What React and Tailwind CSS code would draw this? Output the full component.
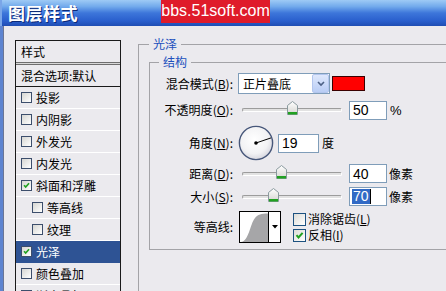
import React from "react";

// Photoshop "图层样式" dialog, 光泽 (Satin) page
const items = [
    { t: "投影" },
    { t: "内阴影" },
    { t: "外发光" },
    { t: "内发光" },
    { t: "斜面和浮雕", c: true },
    { t: "等高线", indent: true },
    { t: "纹理", indent: true },
    { t: "光泽", c: true, sel: true },
    { t: "颜色叠加" },
    { t: "渐变叠加" },
];

const Tick = ({ size = 11 }) => (
    <svg width={size} height={size} viewBox="0 0 11 11">
        <path d="M2.5 5.2 L4.5 7.4 L8.6 2.8" fill="none" stroke="#21a121" strokeWidth="2" />
    </svg>
);

const ListCheck = ({ checked }) => (
    <span className="w-[11px] h-[11px] shrink-0 border border-[#3c4e6c] bg-gradient-to-br from-[#d6d6d2] to-white flex items-center justify-center">
        {checked && <Tick size={9} />}
    </span>
);

const XpCheck = ({ checked }) => (
    <span className="w-[13px] h-[13px] shrink-0 border border-[#1c5180] bg-gradient-to-br from-[#dcdcd7] to-white flex items-center justify-center">
        {checked && <Tick size={11} />}
    </span>
);

const Key = ({ k }) => <span className="underline underline-offset-1">{k}</span>;

const Label = ({ text, k }) => (
    <div className="w-[88px] shrink-0 text-right text-[12px] leading-none text-black pr-[5px]">
        {text}{k && <>(<Key k={k} />)</>}:
    </div>
);

const Slider = ({ pos }) => (
    <div className="relative w-[100px] h-[16px] ml-[4px] flex items-center">
        <div className="w-full h-[4px] rounded-full border-t border-l border-[#9c9c9c] border-b border-r border-b-white border-r-white bg-[#e2e2e2]" />
        <svg className="absolute top-[-1px]" style={{ left: pos - 5 }} width="11" height="14" viewBox="0 0 11 14">
            <defs>
                <linearGradient id="th" x1="0" y1="0" x2="0" y2="1">
                    <stop offset="0" stopColor="#ffffff" />
                    <stop offset="1" stopColor="#d4d4d0" />
                </linearGradient>
            </defs>
            <path d="M0.5 4.5 L5.5 0.5 L10.5 4.5 L10.5 13.5 L0.5 13.5 Z" fill="url(#th)" stroke="#8a9a9e" />
            <rect x="1" y="11" width="9" height="2.5" fill="#21a121" />
        </svg>
    </div>
);

const NumBox = ({ v, w = "w-[38px]", selected }) => (
    <div className={`${w} h-[19px] bg-white border border-[#7f9db9] flex items-center pl-[2px] font-['Liberation_Sans',sans-serif] text-[14px] text-black`}>
        {selected ? (
            <>
                <span className="bg-[#316ac5] text-white leading-[15px] px-[1px]">{v}</span>
                <span className="w-[1px] h-[15px] bg-black" />
            </>
        ) : (
            <span className="leading-none pl-[1px]">{v}</span>
        )}
    </div>
);

const Dial = () => (
    <svg width="36" height="36" viewBox="0 0 36 36">
        <defs>
            <radialGradient id="dg" cx="0.45" cy="0.4" r="0.6">
                <stop offset="0" stopColor="#ffffff" />
                <stop offset="0.7" stopColor="#f2f2f4" />
                <stop offset="1" stopColor="#d8d8e0" />
            </radialGradient>
        </defs>
        <circle cx="18" cy="18" r="16.6" fill="url(#dg)" stroke="#47577a" strokeWidth="1.4" />
        <line x1="18" y1="18" x2="33" y2="12.9" stroke="#000" strokeWidth="1" />
        <circle cx="18" cy="18" r="1.8" fill="#000" />
    </svg>
);

const Contour = () => (
    <div className="w-[42px] h-[32px] ml-[1px] bg-white border border-black flex">
        <svg width="28" height="30" viewBox="0 0 28 30">
            <path d="M1 30 C9 29 10 12 15 6 C18 2.5 21 1.5 28 1.5 L28 30 Z" fill="#a6a6a8" />
        </svg>
        <div className="w-[12px] h-full border-l border-black flex items-center justify-center">
            <svg width="6" height="4" viewBox="0 0 6 4"><path d="M0 0 L6 0 L3 3.5 Z" fill="#000" /></svg>
        </div>
    </div>
);

export default function App() {
    return (
        <div className="w-[446px] h-[291px] overflow-hidden bg-[#ebeaee] flex flex-col font-['Noto_Sans_CJK_SC',sans-serif]">
            {/* title bar */}
            <div className="h-[26px] shrink-0 flex items-center bg-[linear-gradient(to_bottom,#9ecaf5_0%,#72aaec_25%,#3d76da_50%,#2a5fcd_80%,#1f4db3_100%)] border-l-[2px] border-[#7aa6e8]">
                <span className="ml-[6px] mb-[1px] text-[17px] font-bold text-white leading-none tracking-[0.5px] [text-shadow:1px_1px_0_#0c2a78]">图层样式</span>
                <span className="ml-[83px] self-start h-[23px] w-[109px] bg-[#df1b2a] text-white font-['Liberation_Sans',sans-serif] text-[16px] leading-[22px] flex justify-center">bbs.51soft.com</span>
            </div>

            <div className="flex flex-1 min-h-0">
                {/* window frame */}
                <div className="w-[4px] shrink-0 border-l-[3px] border-[#5d84d0] bg-[#6b7694]" />

                {/* style list */}
                <div className="ml-[11px] mt-[14px] w-[106px] shrink-0 border-t border-x border-[#1a1a1a] text-[12px] text-black">
                    <div className="h-[21px] flex items-center pl-[5px] leading-none">样式</div>
                    <div className="h-[3px] border-y border-[#6e6e6e] bg-[#d8d8d8]" />
                    <div className="h-[22px] flex items-center pl-[5px] border-b border-[#1a1a1a] leading-none">混合选项:默认</div>
                    {items.map(it => (
                        <div
                            key={it.t}
                            className={`h-[22px] flex items-center gap-[4px] border-b leading-none ${it.indent ? "pl-[16px]" : "pl-[5px]"} ${it.sel ? "bg-[#2e5394] text-white border-[#2e5394]" : "border-white"}`}
                        >
                            <ListCheck checked={it.c} />
                            <span>{it.t}</span>
                        </div>
                    ))}
                </div>

                {/* right panel */}
                <fieldset className="ml-[17px] mt-[10px] flex-1 min-w-[330px] border-t border-l border-[#a3a3a7]">
                    <legend className="ml-[10px] px-[4px] text-[12px] leading-[16px] text-[#2150bd]">光泽</legend>
                    <fieldset className="ml-[10px] mt-[2px] border-t border-l border-b border-[#a3a3a7] pb-[6px]">
                        <legend className="ml-[9px] px-[4px] text-[12px] leading-[16px] text-[#2150bd]">结构</legend>

                        <div className="mt-[3px] h-[21px] flex items-center">
                            <Label text="混合模式" k="B" />
                            <div className="w-[92px] h-[21px] bg-white border border-[#7f9db9] flex items-center">
                                <span className="flex-1 pl-[4px] text-[12px] leading-none">正片叠底</span>
                                <span className="w-[17px] h-[19px] rounded-[2px] border border-[#b3c6ee] bg-gradient-to-b from-[#dfe8fc] to-[#b9cdf5] flex items-center justify-center">
                                    <svg width="8" height="6" viewBox="0 0 8 6"><path d="M1 1 L4 4 L7 1" fill="none" stroke="#4d6185" strokeWidth="1.6" /></svg>
                                </span>
                            </div>
                            <div className="ml-[2px] w-[33px] h-[15px] bg-[#ff0000] border border-[#3a0000]" />
                        </div>

                        <div className="mt-[6px] h-[20px] flex items-center">
                            <Label text="不透明度" k="O" />
                            <Slider pos={50} />
                            <div className="ml-[7px]"><NumBox v="50" /></div>
                            <span className="ml-[3px] font-['Liberation_Sans',sans-serif] text-[13px] leading-none">%</span>
                        </div>

                        <div className="mt-[5px] h-[36px] flex items-center">
                            <Label text="角度" k="N" />
                            <Dial />
                            <div className="ml-[4px]"><NumBox v="19" w="w-[41px]" /></div>
                            <span className="ml-[3px] text-[12px] leading-none">度</span>
                        </div>

                        <div className="mt-[3px] h-[19px] flex items-center">
                            <Label text="距离" k="D" />
                            <Slider pos={39} />
                            <div className="ml-[7px]"><NumBox v="40" /></div>
                            <span className="ml-[2px] text-[12px] leading-none">像素</span>
                        </div>

                        <div className="mt-[4px] h-[19px] flex items-center">
                            <Label text="大小" k="S" />
                            <Slider pos={31} />
                            <div className="ml-[7px]"><NumBox v="70" selected /></div>
                            <span className="ml-[2px] text-[12px] leading-none">像素</span>
                        </div>

                        <div className="mt-[5px] h-[32px] flex items-center">
                            <Label text="等高线" />
                            <Contour />
                            <div className="ml-[12px] flex flex-col gap-[3px] text-[12px] leading-none">
                                <div className="flex items-center gap-[2px]"><XpCheck /><span>消除锯齿(<Key k="L" />)</span></div>
                                <div className="flex items-center gap-[2px]"><XpCheck checked /><span>反相(<Key k="I" />)</span></div>
                            </div>
                        </div>
                    </fieldset>
                </fieldset>
            </div>
        </div>
    );
}
